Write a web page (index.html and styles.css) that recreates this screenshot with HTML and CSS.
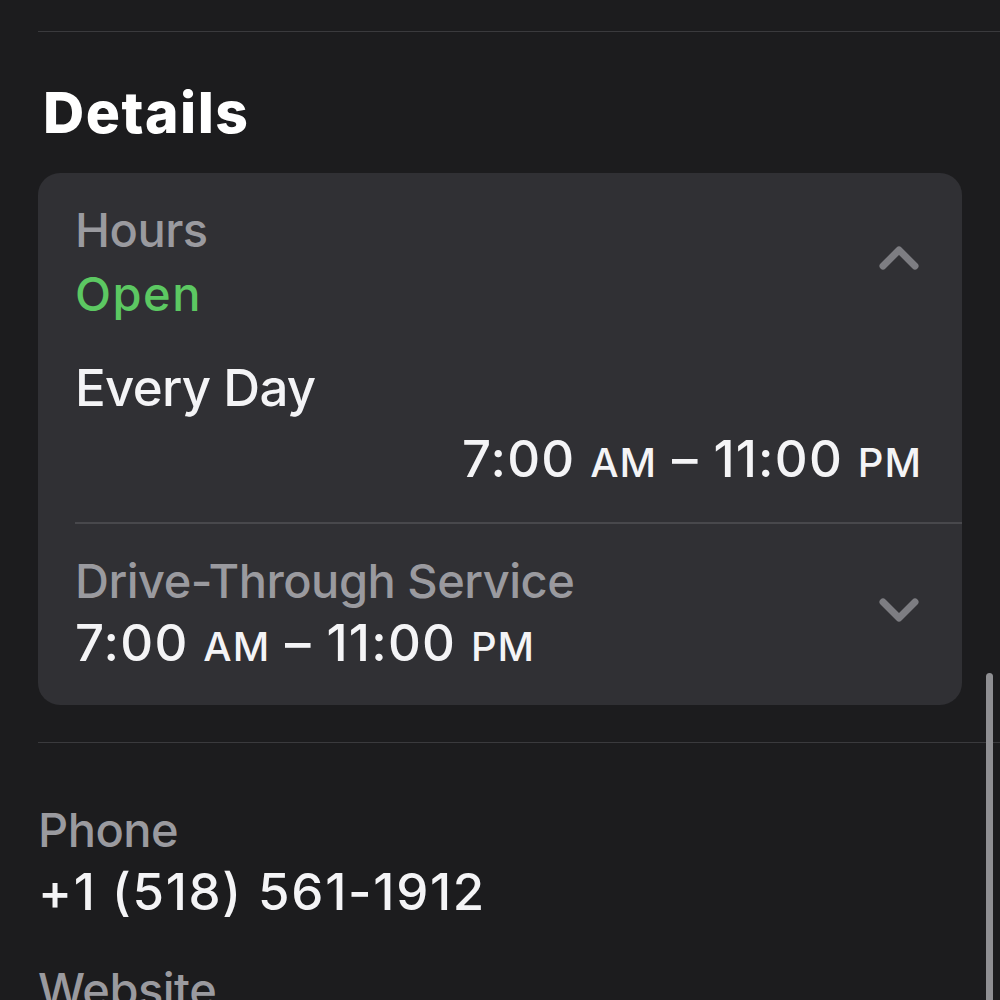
FILE: index.html
```html
<!DOCTYPE html>
<html lang="en">
<head>
<meta charset="utf-8">
<title>Details</title>
<link rel="stylesheet" href="styles.css">
</head>
<body>
<div class="page">
  <div class="rule-top"></div>
  <h1 class="title">Details</h1>

  <section class="card">
    <div class="row head">
      <div class="col">
        <div class="label">Hours</div>
        <div class="status">Open</div>
      </div>
      <svg class="chev chev-up" width="44" height="30" viewBox="0 0 44 30"><polyline points="6,23 22,7 38,23" fill="none" stroke="#7d7d82" stroke-width="7" stroke-linecap="round" stroke-linejoin="round"/></svg>
    </div>
    <div class="row days">Every Day</div>
    <div class="row time-right">7:00 <span class="sc">AM</span> – 11:00 <span class="sc">PM</span></div>
    <div class="divider"></div>
    <div class="row head drive">
      <div class="col">
        <div class="label">Drive-Through Service</div>
        <div class="value">7:00 <span class="sc">AM</span> – 11:00 <span class="sc">PM</span></div>
      </div>
      <svg class="chev chev-down" width="44" height="30" viewBox="0 0 44 30"><polyline points="6,7 22,23 38,7" fill="none" stroke="#7d7d82" stroke-width="7" stroke-linecap="round" stroke-linejoin="round"/></svg>
    </div>
  </section>

  <div class="rule-mid"></div>

  <section class="info">
    <div class="label">Phone</div>
    <div class="value phone">+1 (518) 561-1912</div>
    <div class="label website">Website</div>
  </section>
</div>
<div class="scrollbar"></div>
</body>
</html>
```

FILE: styles.css
```css
html, body {
  margin: 0;
  padding: 0;
  background: #1c1c1e;
  overflow: hidden;
  height: 1000px;
}
body {
  font-family: Inter, "Noto Sans", "Liberation Sans", sans-serif;
  color: #f4f4f6;
  position: relative;
}
.page {
  padding-left: 38px;
}
.rule-top {
  margin-top: 31px;
  height: 1px;
  background: #3a3a3d;
}
.title {
  margin: 51px 0 0 0;
  padding-left: 5px;
  font-size: 57px;
  line-height: 60px;
  font-weight: 800;
  letter-spacing: 1.5px;
  color: #ffffff;
}
.card {
  margin-top: 30px;
  width: 924px;
  box-sizing: border-box;
  background: #303034;
  border-radius: 22px;
  padding: 25px 0 32px 37px;
}
.row {
  padding-right: 40px;
}
.head {
  display: flex;
  justify-content: space-between;
  align-items: flex-start;
}
.label {
  font-size: 47px;
  line-height: 64px;
  font-weight: 500;
  color: #9a9a9f;
  letter-spacing: -0.5px;
}
.status {
  font-size: 47px;
  line-height: 64px;
  font-weight: 500;
  color: #5cc862;
  letter-spacing: 1.5px;
}
.days {
  margin-top: 32px;
  font-size: 51px;
  line-height: 60px;
  font-weight: 500;
  letter-spacing: -0.7px;
}
.time-right {
  margin-top: 11px;
  text-align: right;
  font-size: 51px;
  line-height: 60px;
  font-weight: 500;
  letter-spacing: 1.2px;
}
.value {
  font-size: 51px;
  line-height: 60px;
  font-weight: 500;
  letter-spacing: 1.2px;
  color: #f4f4f6;
}
.phone {
  letter-spacing: 1.7px;
}
.sc {
  font-size: 40px;
  line-height: 40px;
  letter-spacing: 1px;
}
.divider {
  margin-top: 33px;
  height: 2px;
  background: #48484c;
}
.drive {
  margin-top: 25px;
}
.chev {
  display: block;
  margin-right: 1px;
  flex: none;
}
.chev-up {
  margin-top: 45px;
}
.chev-down {
  margin-top: 46px;
}
.rule-mid {
  margin-top: 37px;
  height: 1px;
  background: #3a3a3d;
}
.info {
  margin-top: 55px;
}
.website {
  margin-top: 36px;
}
.scrollbar {
  position: absolute;
  left: 986px;
  top: 673px;
  width: 7px;
  height: 400px;
  border-radius: 4px;
  background: #8f8f93;
}
```
